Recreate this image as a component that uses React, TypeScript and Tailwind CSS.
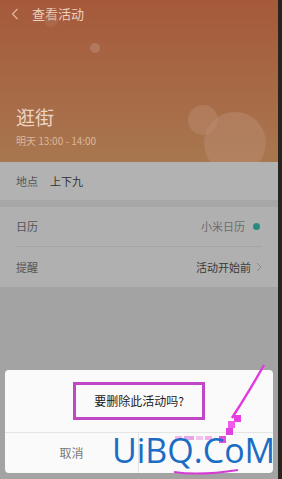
import React from 'react';

const font = { fontFamily: '"Noto Sans CJK SC", "Noto Sans", sans-serif' };

export default function App() {
  return (
    <div className="relative w-[282px] h-[479px] overflow-hidden bg-[#a4a4a4] flex" style={font}>
      <div className="flex-1 flex flex-col">
        {/* Header */}
        <div className="relative h-[162px] bg-gradient-to-b from-[#a5593b] to-[#a8774f] flex flex-col overflow-hidden">
          <div className="flex items-center h-[28px] pl-[11px] gap-[13px] text-[#e2b8a0]">
            <svg width="8" height="12" viewBox="0 0 8 12" fill="none" stroke="currentColor" strokeWidth="1.2">
              <path d="M6.5 1 L1.5 6 L6.5 11" />
            </svg>
            <span className="text-[13px] text-[#ecd0c0]">查看活动</span>
          </div>
          <div className="absolute left-[90px] top-[43px] w-[10px] h-[10px] rounded-full bg-[#c59a86]/40" />
          <div className="absolute left-[44px] top-[13px] w-[14px] h-[14px] rounded-full bg-[#b47a62]/40" />
          <div className="absolute left-[188px] top-[105px] w-[30px] h-[30px] rounded-full bg-[#bf9178]/40" />
          <div className="absolute left-[204px] top-[112px] w-[62px] h-[62px] rounded-full bg-[#b98c72]/50" />
          <div className="mt-auto pl-[16px] pb-[14px] relative">
            <div className="text-[19px] leading-[24px] text-[#ecd3c2]">逛街</div>
            <div className="text-[10px] leading-[14px] mt-[5px] text-[#dcb69c]">明天 13:00 - 14:00</div>
          </div>
        </div>
        {/* Location row */}
        <div className="h-[38px] bg-[#b2b2b2] flex items-center px-[16px] text-[11px]">
          <span className="text-[#555] w-[34px]">地点</span>
          <span className="text-[#333]">上下九</span>
        </div>
        <div className="h-[7px] bg-[#a7a7a7]" />
        {/* Calendar rows */}
        <div className="bg-[#b0b0b0] px-[16px] text-[11px]">
          <div className="h-[40px] flex items-center justify-between border-b border-[#a4a4a4]">
            <span className="text-[#555]">日历</span>
            <span className="flex items-center gap-[8px] text-[#6c6c6c]">
              小米日历
              <span className="w-[7px] h-[7px] rounded-full bg-[#2b8a7f] mr-[2px]" />
            </span>
          </div>
          <div className="h-[40px] flex items-center justify-between">
            <span className="text-[#555]">提醒</span>
            <span className="flex items-center gap-[5px] text-[#3a3a3a]">
              活动开始前
              <svg width="6" height="10" viewBox="0 0 6 10" fill="none" stroke="#8a8a8a" strokeWidth="1">
                <path d="M1 1 L5 5 L1 9" />
              </svg>
            </span>
          </div>
        </div>
        <div className="flex-1 bg-[#a3a3a3]" />
      </div>
      <div className="w-[4px] bg-[#2a2421]" />

      {/* Dialog */}
      <div className="absolute left-[5px] top-[370px] w-[268px] h-[103px] bg-[#fafafa] rounded-[4px] flex flex-col">
        <div className="h-[62px] flex items-center justify-center">
          <div className="w-[132px] h-[38px] border-[3px] border-[#c048c6] flex items-center justify-center text-[12px] text-[#222]">
            要删除此活动吗?
          </div>
        </div>
        <div className="flex-1 flex border-t border-[#e4e4e4]">
          <div className="w-[134px] flex items-center justify-center text-[12px] text-[#777] border-r border-[#e4e4e4]">取消</div>
          <div className="flex-1" />
        </div>
      </div>

      {/* Watermark */}
      <svg className="absolute left-0 top-0" width="282" height="479" viewBox="0 0 282 479">
        <path d="M264 365 Q250 390 232 418" stroke="#e33ae0" strokeWidth="2.5" fill="none" />
        <rect x="234" y="415" width="7" height="7" fill="#e73fe5" />
        <rect x="228" y="421" width="7" height="7" fill="#ee5ce9" />
        <rect x="226" y="428" width="7" height="7" fill="#e040df" />
        <rect x="219" y="436" width="7" height="7" fill="#e050dc" />
        <rect x="175" y="436" width="7" height="4" fill="#f0b8ee" />
        <rect x="184" y="436" width="10" height="4" fill="#e9a6e6" />
        <rect x="196" y="436" width="7" height="4" fill="#f2c4f0" />
        <rect x="205" y="436" width="7" height="4" fill="#efb0ec" />
        <path d="M174 472 Q200 476 238 470" stroke="#d63bd6" strokeWidth="2" fill="none" />
      </svg>
      <div className="absolute left-[112px] top-[430px] text-[34px] leading-[40px] font-medium text-[#1b6cc4]" style={{ fontFamily: '"Open Sans", "DejaVu Sans", sans-serif' }}>
        UiBQ.CoM
      </div>
    </div>
  );
}
